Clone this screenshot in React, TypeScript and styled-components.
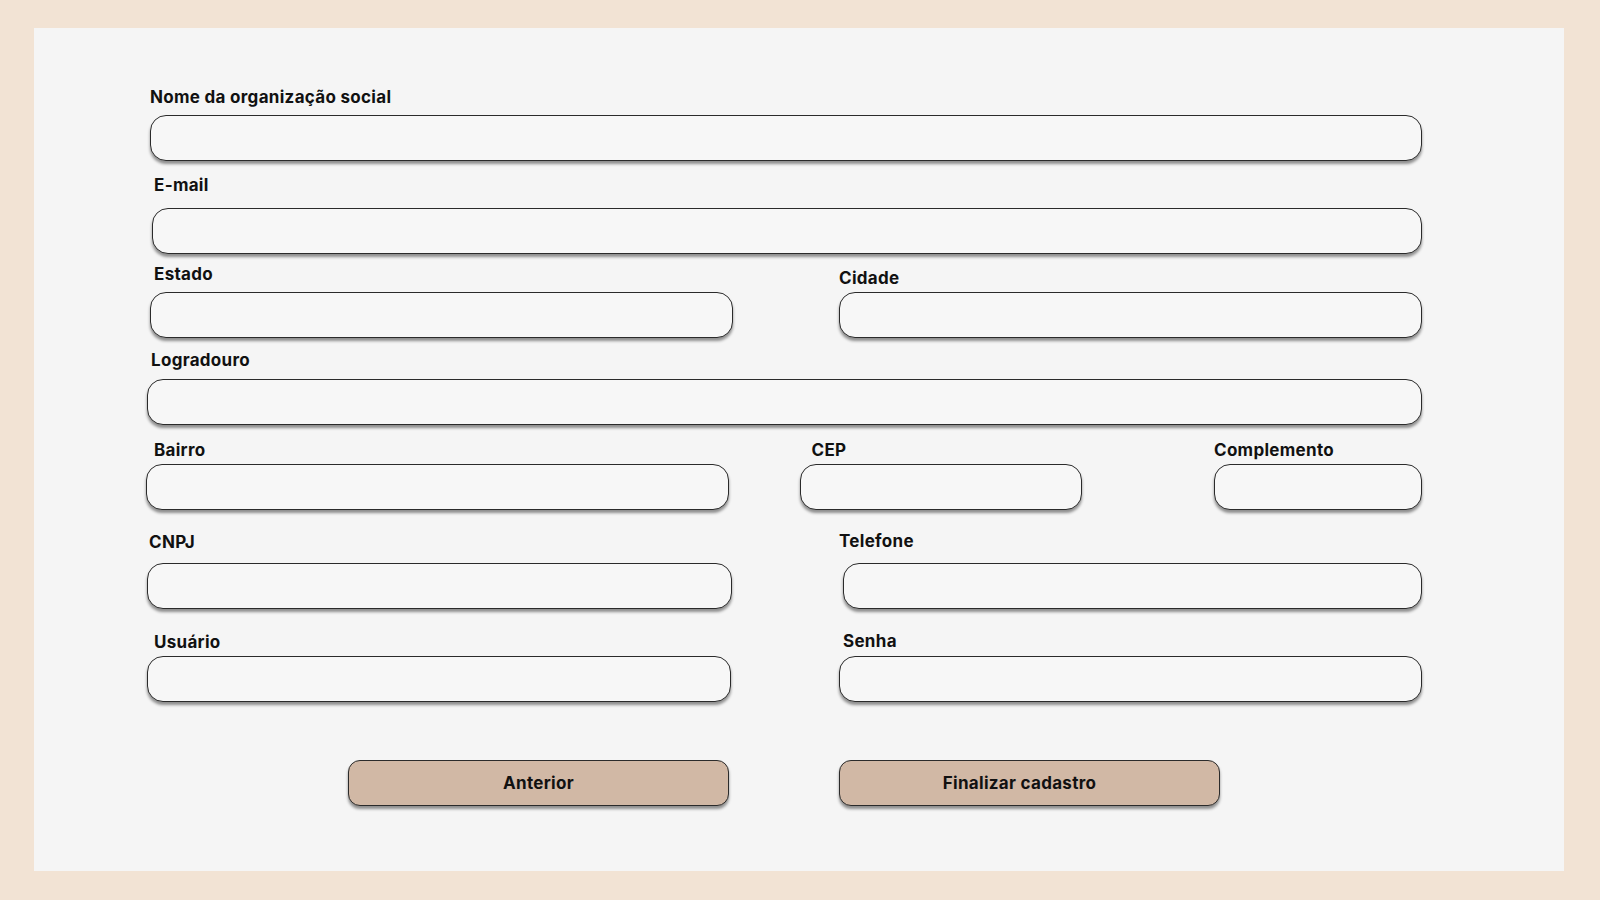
import React from 'react';
import styled, { createGlobalStyle } from 'styled-components';

const GlobalStyle = createGlobalStyle`
  html, body {
    margin: 0;
    padding: 0;
    background: #f2e3d4;
  }
  * {
    box-sizing: border-box;
  }
`;

const Page = styled('div')`
  width: 1600px;
  height: 900px;
  padding: 28px 36px 29px 34px;
  background: #f2e3d4;
  font-family: Inter, 'Noto Sans', sans-serif;
`;

const Panel = styled('div')`
  height: 100%;
  background: #f5f5f5;
  padding: 59px 142px 0 116px;
`;

const Form = styled('form')`
  display: flex;
  flex-direction: column;
  width: 1272px;
`;

const Row = styled('div')<{ $mt?: number; $cols?: string }>`
  display: grid;
  grid-template-columns: ${(p) => p.$cols ?? '1fr'};
  margin-top: ${(p) => p.$mt ?? 0}px;
  align-items: end;
`;

const FieldWrap = styled('label')<{ $ml?: number; $mr?: number }>`
  display: flex;
  flex-direction: column;
  margin-left: ${(p) => p.$ml ?? 0}px;
  margin-right: ${(p) => p.$mr ?? 0}px;
`;

const LabelText = styled('span')<{ $gap: number; $indent?: number }>`
  font-size: 17px;
  font-weight: 700;
  line-height: 20px;
  color: #111111;
  letter-spacing: 0.3px;
  margin-bottom: ${(p) => p.$gap}px;
  margin-left: ${(p) => p.$indent ?? 0}px;
`;

const Input = styled('input')`
  height: 46px;
  width: 100%;
  border: 1px solid #2b2b2b;
  border-radius: 16px;
  background: #f7f7f7;
  box-shadow: 0 3px 3px rgba(0, 0, 0, 0.42);
  padding: 0 16px;
  font-size: 16px;
  font-family: inherit;
  outline: none;
`;

const ButtonRow = styled('div')`
  display: grid;
  grid-template-columns: 381px 381px;
  column-gap: 110px;
  margin-top: 58px;
  padding-left: 198px;
`;

const Button = styled('button')<{ $shift?: number }>`
  height: 46px;
  border: 1px solid #2b2b2b;
  border-radius: 12px;
  background: #d1b8a5;
  box-shadow: 0 3px 3px rgba(0, 0, 0, 0.42);
  font-family: inherit;
  font-size: 17px;
  font-weight: 700;
  letter-spacing: 0.3px;
  color: #111111;
  padding: 0 ${(p) => p.$shift ?? 0}px 0 0;
  cursor: pointer;
`;

interface FieldProps {
  label: string;
  gap: number;
  indent?: number;
  ml?: number;
  mr?: number;
  type?: string;
}

const Field: React.FC<FieldProps> = ({ label, gap, indent, ml, mr, type = 'text' }) => (
  <FieldWrap $ml={ml} $mr={mr}>
    <LabelText $gap={gap} $indent={indent}>
      {label}
    </LabelText>
    <Input type={type} />
  </FieldWrap>
);

export default function App() {
  return (
    <>
      <GlobalStyle />
      <Page>
        <Panel>
          <Form onSubmit={(e) => e.preventDefault()}>
            <Row>
              <Field label="Nome da organização social" gap={8} />
            </Row>
            <Row $mt={14}>
              <Field label="E-mail" gap={13} indent={2} ml={2} />
            </Row>
            <Row $mt={10} $cols="583px 1fr 583px">
              <Field label="Estado" gap={8} indent={4} />
              <div />
              <Field label="Cidade" gap={4} />
            </Row>
            <Row $mt={12}>
              <Field label="Logradouro" gap={9} indent={4} ml={-3} />
            </Row>
            <Row $mt={15} $cols="583px 1fr 282px 1fr 208px">
              <Field label="Bairro" gap={4} indent={8} ml={-4} mr={4} />
              <div />
              <Field label="CEP" gap={4} indent={12} ml={-33} mr={33} />
              <div />
              <Field label="Complemento" gap={4} />
            </Row>
            <Row $mt={21} $cols="583px 1fr 583px">
              <Field label="CNPJ" gap={11} indent={2} ml={-3} mr={1} />
              <div />
              <Field label="Telefone" gap={12} indent={-4} ml={4} />
            </Row>
            <Row $mt={22} $cols="583px 1fr 583px">
              <Field label="Usuário" gap={4} indent={7} ml={-3} mr={2} />
              <div />
              <Field label="Senha" gap={5} indent={4} type="password" />
            </Row>
            <ButtonRow>
              <Button type="button">Anterior</Button>
              <Button type="submit" $shift={20}>
                Finalizar cadastro
              </Button>
            </ButtonRow>
          </Form>
        </Panel>
      </Page>
    </>
  );
}
